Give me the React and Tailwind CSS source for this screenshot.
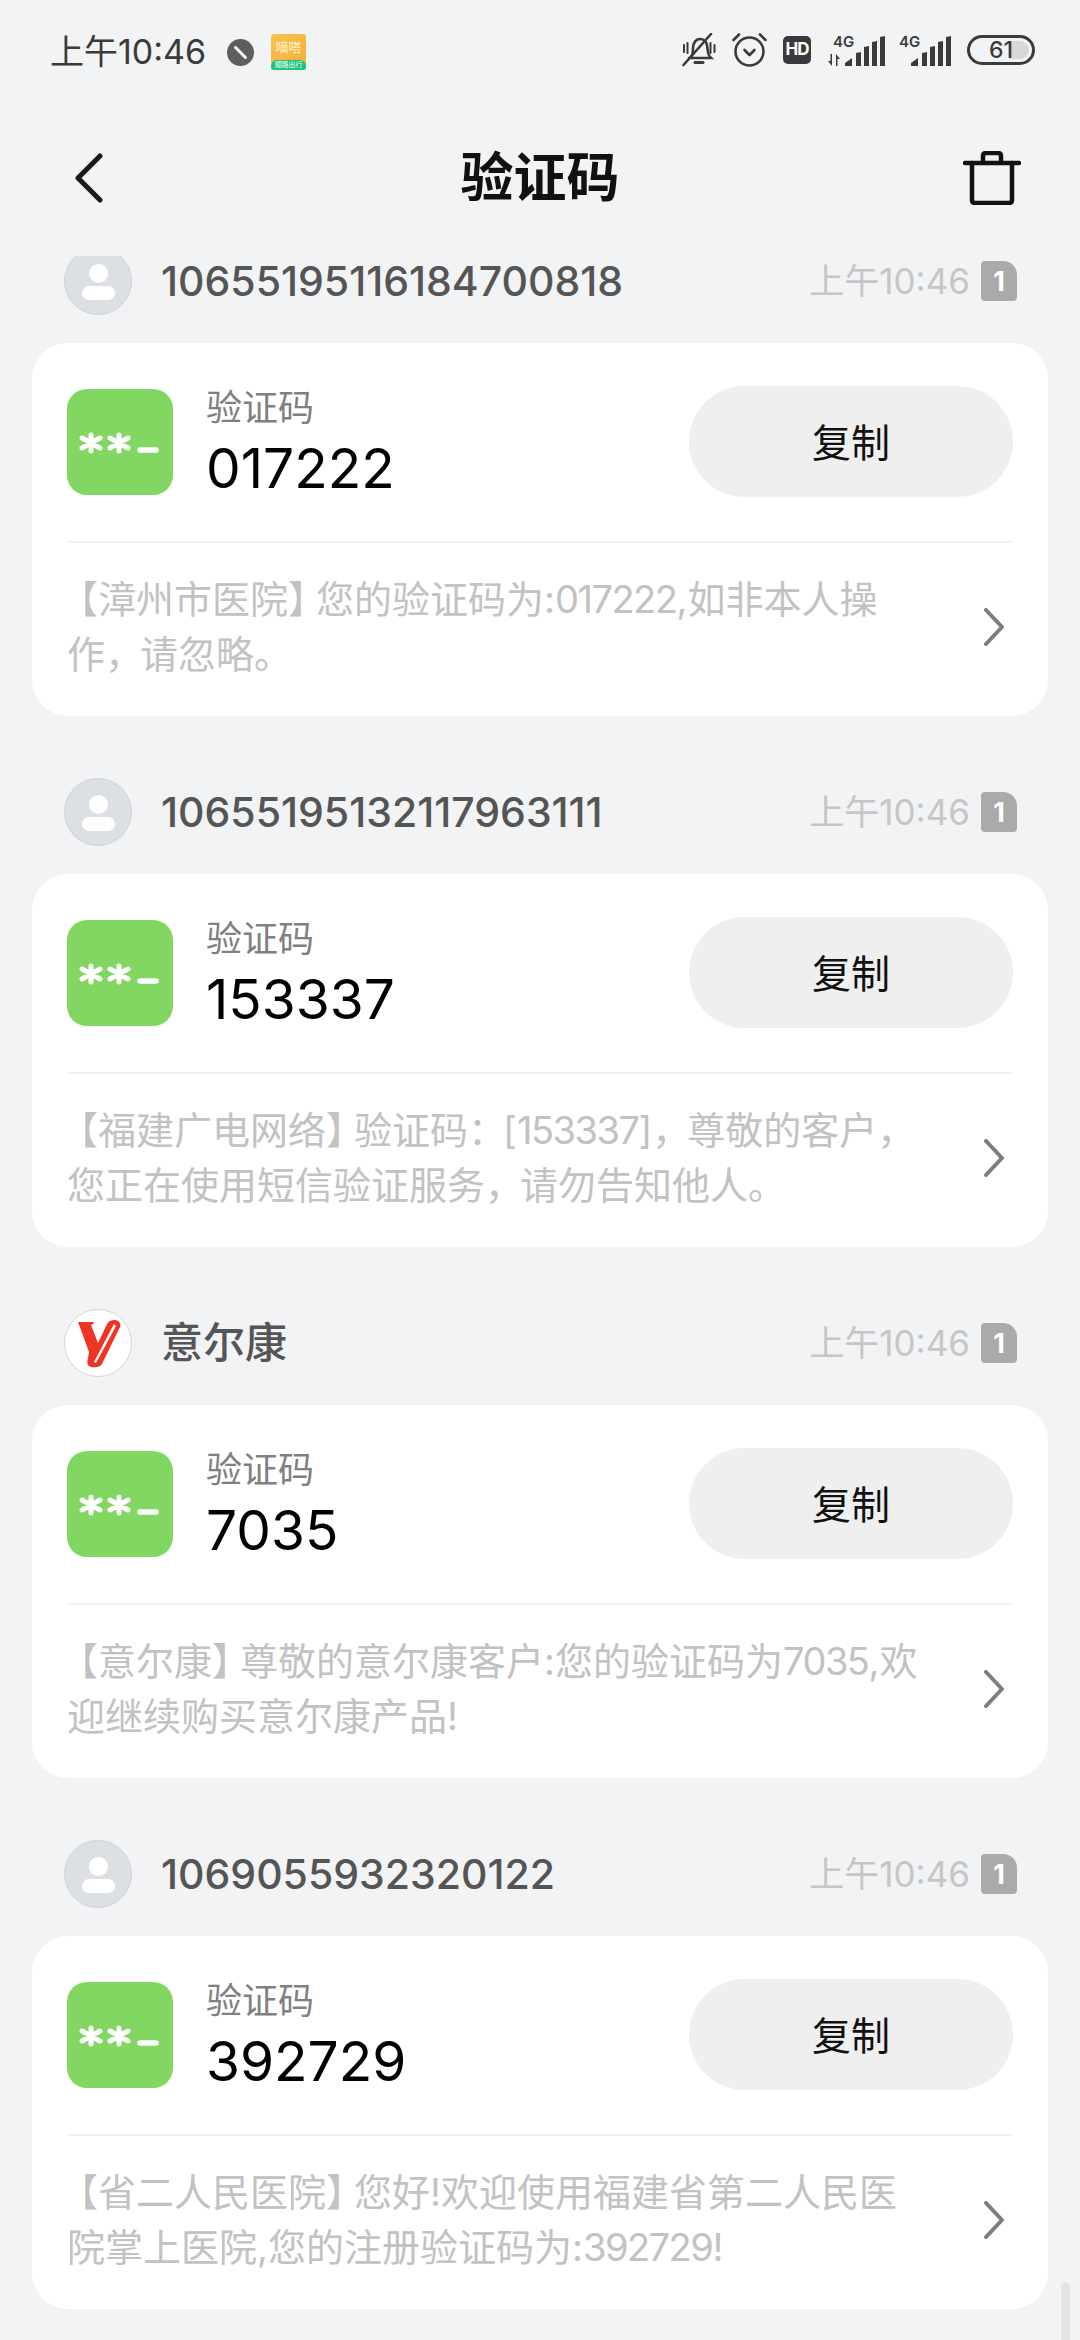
const messages = [
  {
    sender: "10655195116184700818",
    code: "017222",
    lines: ["【漳州市医院】您的验证码为:017222,如非本人操", "作，请忽略。"],
  },
  {
    sender: "10655195132117963111",
    code: "153337",
    lines: ["【福建广电网络】验证码：[153337]，尊敬的客户，", "您正在使用短信验证服务，请勿告知他人。"],
  },
  {
    sender: "意尔康",
    logo: true,
    code: "7035",
    lines: ["【意尔康】尊敬的意尔康客户:您的验证码为7035,欢", "迎继续购买意尔康产品!"],
  },
  {
    sender: "1069055932320122",
    code: "392729",
    lines: ["【省二人民医院】您好!欢迎使用福建省第二人民医", "院掌上医院,您的注册验证码为:392729!"],
  },
];

const BellOff = () => (
  <svg width="34" height="34" viewBox="0 0 34 34" fill="none" stroke="#3a3a3a" strokeWidth="2.6" strokeLinecap="round">
    <path d="M9 24c2-2 2-5 2-9 0-5 3-9 7-9 3 0 6 2 7 6l1 7c0 2 1 4 3 6H7" />
    <path d="M13 29.5h8" strokeWidth="3" />
    <path d="M2 12v7M5.500 10v10M28.500 10v10M32.500 12v7" strokeWidth="2" />
    <path d="M1.500 32 29 1" />
  </svg>
);

const Alarm = () => (
  <svg width="35" height="34" viewBox="0 0 35 34" fill="none" stroke="#3a3a3a" strokeWidth="2.6" strokeLinecap="round" strokeLinejoin="round">
    <circle cx="17.500" cy="18.500" r="14" />
    <path d="M1.500 7 7 1.500M33.500 7 28 1.500" />
    <path d="m12.500 17 5 5 5-5" />
  </svg>
);

const Signal = ({ arrows }) => {
  const width = arrows ? 57 : 52;
  const barX = arrows ? 17 : 12;
  return (
    <svg width={width} height="33" viewBox={`0 0 ${width} 33`} fill="#3a3a3a" className="overflow-visible">
      <text x={arrows ? 5 : 0} y="13" fontSize="15" fontWeight="600" fontFamily="Inter">4G</text>
      {arrows && <path d="M4 20v12L0 27h2.500v-7zM8 32V20l4 5H9.500v7z" />}
      <g transform={`translate(${barX} 0)`}>
        <path d="M0 32v-3l7-5v8zM11 32V19l5-1v14zM19 32V13l5-1v20zM27 32V8l5-1v25zM35 32V3l5-1v30z" />
      </g>
    </svg>
  );
};

const Trash = () => (
  <svg width="58" height="54" viewBox="0 0 58 54" fill="none" stroke="#111" strokeWidth="4.500" strokeLinecap="round" strokeLinejoin="round">
    <path d="M2 12h54" />
    <path d="M9 12v37c0 2 1 3 3 3h34c2 0 3-1 3-3V12" />
    <path d="M20 11V5c0-2 1-3 3-3h12c2 0 3 1 3 3v6" />
  </svg>
);

const BackArrow = () => (
  <svg width="28" height="50" viewBox="0 0 28 50" fill="none" stroke="#1a1a1a" strokeWidth="5" strokeLinecap="round" strokeLinejoin="round">
    <path d="M25 3 3 25l22 22" />
  </svg>
);

const MoreArrow = () => (
  <svg width="20" height="38" viewBox="0 0 20 38" fill="none" stroke="#7d7d7d" strokeWidth="4" strokeLinecap="round" strokeLinejoin="round">
    <path d="m2 2 16 17L2 36" />
  </svg>
);

// the phone's font sets CJK brackets, commas and digits tighter than ours
const MessageLine = ({ text }) =>
  text.split(/([【】，：]|\d+)/).map((part, idx) => {
    if (part === "【") return <span key={idx} className="-ml-[7px]">{part}</span>;
    if (part === "】") return <span key={idx} className="tracking-[-10px]">{part}</span>;
    if (part === "，" || part === "：") return <span key={idx} className="tracking-[-3px]">{part}</span>;
    if (/^\d/.test(part)) return <span key={idx} className="tracking-[-1.5px]">{part}</span>;
    return part;
  });

const StatusBar = () => (
  <div className="flex h-[100px] items-start justify-between pl-[50px] pr-[45px] pt-[33px] text-[#3a3a3a]">
    <div className="flex items-center">
      <span className="text-[34px] leading-[38px]">上午10:46</span>
      <span className="ml-[21px] flex h-[27px] w-[27px] items-center justify-center rounded-full bg-[#5e5e5e]">
        <span className="h-[3px] w-[17px] rotate-45 rounded-full bg-white" />
      </span>
      <span className="ml-[17px] flex h-[36px] w-[35px] flex-col overflow-hidden rounded-[3px] bg-gradient-to-br from-[#f8c24e] to-[#f6ae3c]">
        <span className="h-[26px] text-center text-[13px] leading-[26px] text-[#fff3cf]">嘀嗒</span>
        <span className="h-[10px] rounded-t-[6px] bg-[#1fc27a] text-center text-[7px] leading-[10px] text-white">顺路出行</span>
      </span>
    </div>
    <div className="flex items-center">
      <BellOff />
      <span className="ml-[16px]"><Alarm /></span>
      <span className="ml-[16px] flex h-[28px] w-[28px] items-center justify-center rounded-[5px] bg-[#3a3a3a] text-[17px] font-bold tracking-[-1px] text-white">HD</span>
      <span className="ml-[17px]"><Signal arrows /></span>
      <span className="ml-[14px]"><Signal /></span>
      <span className="relative ml-[16px] flex h-[30px] w-[68px] items-center justify-center overflow-hidden rounded-full border-[3px] border-[#3a3a3a]">
        <span className="absolute bottom-[3px] right-[3px] top-[3px] w-[20px] rounded-r-full bg-[#d8d8d8]" />
        <span className="relative text-[23px] font-medium leading-none">61</span>
      </span>
    </div>
  </div>
);

const NavBar = () => (
  <div className="flex h-[156px] items-center justify-between pl-[75px] pr-[59px]">
    <span className="w-[42px]"><BackArrow /></span>
    <h1 className="text-[53px] font-bold leading-none text-[#111]">验证码</h1>
    <Trash />
  </div>
);

const Avatar = ({ logo }) =>
  logo ? (
    <span className="h-[68px] w-[68px] rounded-full border border-[#d5d6d8] bg-white">
      <svg width="66" height="66" viewBox="0 0 66 66">
        <path d="M13 12h16l-1 2-2 1 7 18 9-19c2-4 8-5 11-3 3 2 3 5 1 8L37 54c-2 4-10 4-13 2-2-1-2-5-1-8l1-6z" fill="#ee3524" />
        <path d="M49 14 29 52l2 1 20-37z" fill="#fff" />
      </svg>
    </span>
  ) : (
    <span className="flex h-[68px] w-[68px] flex-col items-center justify-center gap-[3px] rounded-full border border-[#d0d2d6] bg-[#dcdfe3] pt-[2px]">
      <span className="h-[19px] w-[19px] rounded-full bg-white" />
      <span className="h-[14px] w-[33px] rounded-full bg-white" />
    </span>
  );

const Header = ({ sender, logo }) => (
  <div className="flex h-[66px] items-center pl-[64px] pr-[63px]">
    <Avatar logo={logo} />
    <span className={`ml-[29px] flex-1 font-medium leading-none text-[#555] ${logo ? "text-[42px]" : "text-[41px]"}`}>{sender}</span>
    <span className="text-[35px] leading-none text-[#c4c6c8]">上午10:46</span>
    <span className="ml-[11px] flex h-[40px] w-[36px] items-center justify-center rounded-[4px] rounded-tr-[14px] bg-[#a9aaac] text-[27px] font-bold leading-none text-white">1</span>
  </div>
);

const CodeIcon = () => (
  <span className="flex h-[106px] w-[106px] rounded-[20px] bg-[#82d762]">
    <svg width="106" height="106" viewBox="0 0 106 106" stroke="#fff" strokeWidth="5" strokeLinecap="round" fill="none">
      <path d="M24 46v16M15 49l18 10M33 49 15 59M52 46v16M43 49l18 10M61 49 43 59" />
      <path d="M73 61h16" strokeWidth="5.500" />
    </svg>
  </span>
);

const CodeCard = ({ code, lines }) => (
  <div className="mx-[32px] h-[373px] rounded-[36px] bg-white px-[35px]">
    <div className="flex h-[200px] items-start border-b-2 border-[#f1f1f2] pt-[43px]">
      <span className="mt-[3px]"><CodeIcon /></span>
      <div className="ml-[33px] flex-1">
        <p className="text-[36px] leading-[44px] text-[#808080]">验证码</p>
        <p className="mt-[6px] text-[55px] leading-[64px] text-black">{code}</p>
      </div>
      <button type="button" className="h-[111px] w-[324px] rounded-full bg-[#efefef] pt-[4px] text-[39px] text-[#111]">
        复制
      </button>
    </div>
    <div className="flex items-center justify-between pt-[29px]">
      <p className="whitespace-nowrap text-[38px] leading-[55px] text-[#c2c2c2]">
        <MessageLine text={lines[0]} />
        <br />
        <MessageLine text={lines[1]} />
      </p>
      <span className="mr-[9px]"><MoreArrow /></span>
    </div>
  </div>
);

const App = () => (
  <div className="relative flex h-[2340px] w-[1080px] flex-col overflow-hidden bg-[#f2f3f5] font-['Inter','Noto_Sans_CJK_SC',sans-serif]">
    <StatusBar />
    <NavBar />
    <div className="flex-1 overflow-hidden">
      <div className="-mt-[8px] flex flex-col gap-[63px]">
        {messages.map((m) => (
          <div key={m.code} className="flex flex-col gap-[29px]">
            <Header sender={m.sender} logo={m.logo} />
            <CodeCard code={m.code} lines={m.lines} />
          </div>
        ))}
      </div>
    </div>
    <span className="absolute bottom-0 right-[10px] h-[58px] w-[9px] rounded-t-full bg-[#e2e3e5]" />
  </div>
);

export default App;
